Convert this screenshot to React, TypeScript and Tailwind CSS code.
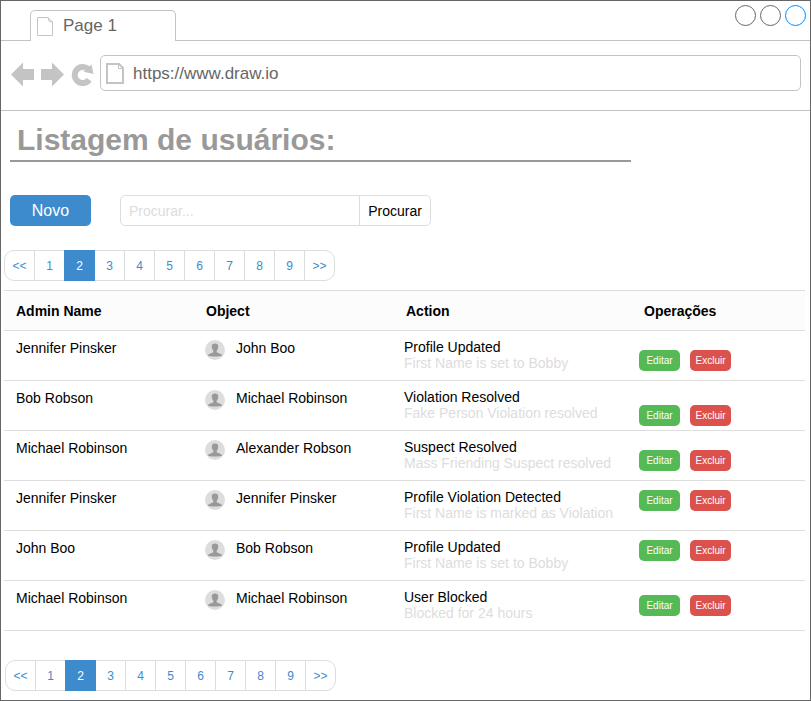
import React from "react";

type Row = {
  admin: string;
  object: string;
  action: string;
  detail: string;
  opsPadding: string;
};

const rows: Row[] = [
  { admin: "Jennifer Pinsker", object: "John Boo", action: "Profile Updated", detail: "First Name is set to Bobby", opsPadding: "pt-[19px]" },
  { admin: "Bob Robson", object: "Michael Robinson", action: "Violation Resolved", detail: "Fake Person Violation resolved", opsPadding: "pt-6" },
  { admin: "Michael Robinson", object: "Alexander Robson", action: "Suspect Resolved", detail: "Mass Friending Suspect resolved", opsPadding: "pt-[19px]" },
  { admin: "Jennifer Pinsker", object: "Jennifer Pinsker", action: "Profile Violation Detected", detail: "First Name is marked as Violation", opsPadding: "pt-[9px]" },
  { admin: "John Boo", object: "Bob Robson", action: "Profile Updated", detail: "First Name is set to Bobby", opsPadding: "pt-[9px]" },
  { admin: "Michael Robinson", object: "Michael Robinson", action: "User Blocked", detail: "Blocked for 24 hours", opsPadding: "pt-[14px]" },
];

const pages = ["<<", "1", "2", "3", "4", "5", "6", "7", "8", "9", ">>"];

function Avatar() {
  return (
    <svg className="h-5 w-5 shrink-0" viewBox="0 0 20 20" aria-hidden="true">
      <circle cx="10" cy="10" r="10" fill="#dddddd" />
      <path
        d="M10 3.500C7.800 3.500 6.700 4.700 6.800 6.700C6.800 8.300 7.500 9.700 8.300 10.600V12.200C7.800 13.200 3.600 13 2.800 15.800C5 16.700 15 16.700 17.200 15.800C16.400 13 12.200 13.200 11.700 12.200V10.600C12.500 9.700 13.200 8.300 13.200 6.700C13.300 4.700 12.200 3.500 10 3.500Z"
        fill="#999999"
      />
    </svg>
  );
}

function Pagination({ label }: { label: string }) {
  return (
    <nav aria-label={label} className="flex">
      {pages.map((page) => (
        <button
          key={page}
          type="button"
          aria-current={page === "2" ? "page" : undefined}
          className={
            page === "2"
              ? "relative z-10 -ml-px h-[31px] w-[31px] border border-[#3d8bcd] bg-[#3d8bcd] text-xs text-white"
              : "-ml-px h-[31px] w-[31px] border border-[#dddddd] bg-white text-xs text-[#3d8bcd] first:ml-0 first:rounded-l-[10px] last:rounded-r-[10px]"
          }
        >
          {page}
        </button>
      ))}
    </nav>
  );
}

function BrowserChrome() {
  return (
    <header>
      <div className="flex h-10 items-end justify-between border-b border-[#c4c4c4] pl-[29px]">
        <div className="-mb-px flex h-[31px] w-[146px] items-center gap-[10px] rounded-t-[5px] border border-b-0 border-[#c4c4c4] bg-white pl-1.5 text-[17px] text-[#666666]">
          <svg className="h-[19px] w-4" viewBox="0 0 16 19" fill="none" stroke="#c4c4c4" aria-hidden="true">
            <path d="M0.500 0.500H11L15.500 5V18.500H0.500Z" />
            <path d="M11 0.500L12 4L15.500 5" />
          </svg>
          <span>Page 1</span>
        </div>
        <div className="flex gap-1 self-start pt-1 pr-1">
          <button type="button" aria-label="Minimize" className="h-[21px] w-[21px] rounded-full border border-[#666666]" />
          <button type="button" aria-label="Maximize" className="h-[21px] w-[21px] rounded-full border border-[#666666]" />
          <button type="button" aria-label="Close" className="h-[21px] w-[21px] rounded-full border border-[#008cff]" />
        </div>
      </div>
      <div className="flex h-[70px] items-start border-b border-[#c4c4c4] pt-3.5 pr-[9px] pl-[10px]">
        <div className="mt-[7px] mr-[6px] flex gap-[7px]">
          <button type="button" aria-label="Back">
            <svg className="h-6 w-[23px]" viewBox="0 0 23 24" fill="#c4c4c4">
              <path d="M0 12.500L12 0.500V7H23V18H12V24.500Z" />
            </svg>
          </button>
          <button type="button" aria-label="Forward">
            <svg className="h-6 w-[23px]" viewBox="0 0 23 24" fill="#c4c4c4">
              <path d="M23 12.500L11 0.500V7H0V18H11V24.500Z" />
            </svg>
          </button>
          <button type="button" aria-label="Reload">
            <svg className="h-6 w-[23px]" viewBox="0 0 23 24">
              <path d="M18.200 17.700A8 8 0 1 1 17.200 7.200" fill="none" stroke="#c4c4c4" strokeWidth="6" />
              <path d="M20.500 2.500L22.500 12L12.500 9.800Z" fill="#c4c4c4" />
            </svg>
          </button>
        </div>
        <div className="flex h-9 min-w-0 flex-1 items-center gap-2 rounded-[5px] border border-[#c4c4c4] pl-[5px]">
          <svg className="h-[21px] w-[18px] shrink-0" viewBox="0 0 18 21" fill="none" stroke="#c4c4c4" aria-hidden="true">
            <path d="M1 1H13L17 5V20H1Z" strokeWidth="2" />
            <path d="M12.500 1V5.500H17" />
          </svg>
          <input
            type="text"
            aria-label="Address"
            defaultValue="https://www.draw.io"
            className="h-full min-w-0 flex-1 bg-transparent pt-px pl-px text-[17px] leading-6 text-[#666666] outline-none"
          />
        </div>
      </div>
    </header>
  );
}

export default function App() {
  return (
    <div className="min-h-screen border border-[#666666] bg-white pb-[9px] font-['Liberation_Sans',Arial,sans-serif] text-black">
      <BrowserChrome />
      <main>
        <h1 className="mr-[179px] ml-[9px] border-b-2 border-[#999999] pt-[11px] pb-0.5 pl-[7px] text-[30px] leading-9 font-bold text-[#999999]">
          Listagem de usuários:
        </h1>
        <div className="mt-[33px] flex gap-[29px] pl-[9px]">
          <button type="button" className="h-[31px] w-[81px] rounded-[5px] bg-[#3d8bcd] pt-px text-base text-white">
            Novo
          </button>
          <form className="flex" onSubmit={(event) => event.preventDefault()}>
            <input
              type="search"
              aria-label="Procurar"
              placeholder="Procurar..."
              className="h-[31px] w-[240px] rounded-l-[5px] border border-[#dddddd] pl-2 text-sm outline-none placeholder:text-[#dddddd]"
            />
            <button type="submit" className="-ml-px h-[31px] w-[72px] rounded-r-[5px] border border-[#dddddd] text-sm">
              Procurar
            </button>
          </form>
        </div>
        <div className="mt-6 pl-[3px]">
          <Pagination label="Páginas" />
        </div>
        <div className="mt-[9px] mr-[5px] ml-[3px]">
          <table className="w-full table-fixed border-separate border-spacing-0 text-left text-sm leading-4">
            <colgroup>
              <col className="w-[190px]" />
              <col className="w-[200px]" />
              <col className="w-[235px]" />
              <col />
            </colgroup>
            <thead>
              <tr className="h-[41px] bg-[#fcfcfc]">
                <th className="border-y border-[#dddddd] pl-3">Admin Name</th>
                <th className="border-y border-[#dddddd] pl-3">Object</th>
                <th className="border-y border-[#dddddd] pl-3">Action</th>
                <th className="border-y border-[#dddddd] pl-[15px]">Operações</th>
              </tr>
            </thead>
            <tbody>
              {rows.map((row, index) => (
                <tr key={index} className="h-[50px] align-top">
                  <td className="border-b border-[#dddddd] pt-[9px] pl-3">{row.admin}</td>
                  <td className="border-b border-[#dddddd] pt-[9px] pl-[11px]">
                    <div className="flex gap-[11px]">
                      <Avatar />
                      <span>{row.object}</span>
                    </div>
                  </td>
                  <td className="border-b border-[#dddddd] pt-2 pl-[10px]">
                    <div>{row.action}</div>
                    <div className="whitespace-nowrap text-[#dddddd]">{row.detail}</div>
                  </td>
                  <td className={`border-b border-[#dddddd] pl-[10px] ${row.opsPadding}`}>
                    <div className="flex gap-[10px] text-[10px] text-white">
                      <button type="button" className="h-[21px] w-[41px] rounded-[5px] bg-[#55b955]">
                        Editar
                      </button>
                      <button type="button" className="h-[21px] w-[41px] rounded-[5px] bg-[#db524c]">
                        Excluir
                      </button>
                    </div>
                  </td>
                </tr>
              ))}
            </tbody>
          </table>
        </div>
        <div className="mt-[29px] pl-1">
          <Pagination label="Páginas, rodapé" />
        </div>
      </main>
    </div>
  );
}
